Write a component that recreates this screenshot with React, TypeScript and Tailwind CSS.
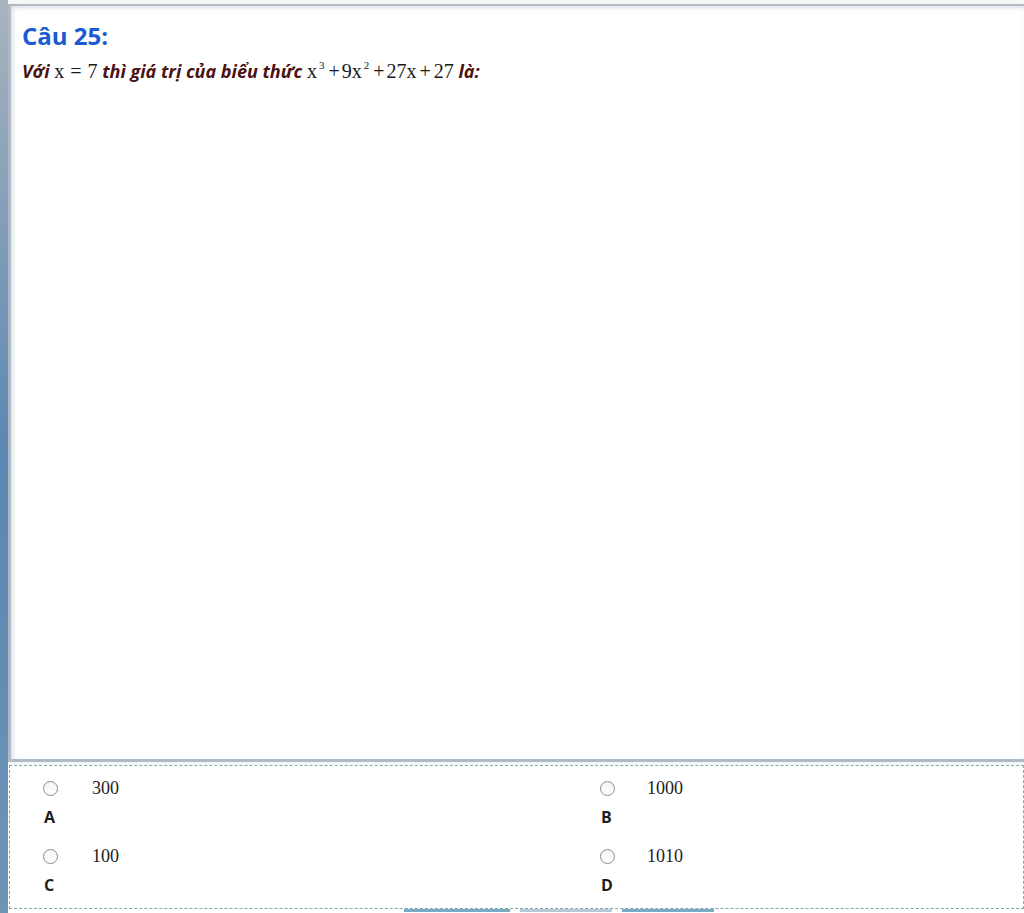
import React from "react";

type Opt = { label: string; value: string };

const rows: Opt[][] = [
  [
    { label: "A", value: "300" },
    { label: "B", value: "1000" },
  ],
  [
    { label: "C", value: "100" },
    { label: "D", value: "1010" },
  ],
];

const serif = { fontFamily: '"Liberation Serif", "Times New Roman", serif' };

function Radio() {
  return (
    <span className="inline-block w-[15px] h-[15px] rounded-full border border-[#8c8c8c] bg-gradient-to-b from-[#f4f4f4] to-white shrink-0" />
  );
}

function Option({ label, value, col }: Opt & { col: number }) {
  return (
    <div className={col === 0 ? "w-[557px] pl-[33px]" : "flex-1 pl-[33px]"}>
      <div className="flex items-center h-[24px]">
        <Radio />
        <span className={`text-[18px] text-[#222] ${col === 0 ? "ml-[34px]" : "ml-[32px]"}`} style={serif}>
          {value}
        </span>
      </div>
      <div className="mt-[6px] pl-[1px] text-[16px] font-bold text-[#1e1e1e] leading-[22px]">{label}</div>
    </div>
  );
}

function Sup({ n }: { n: string }) {
  return <sup className="text-[11px] -top-[9px] ml-[2px] mr-[4px]">{n}</sup>;
}

export default function App() {
  return (
    <div
      className="w-[1024px] h-[913px] bg-white flex overflow-hidden"
      style={{ fontFamily: '"Open Sans", "Noto Sans", sans-serif' }}
    >
      <div className="w-[8px] h-full bg-gradient-to-b from-[#a9b3bd] via-[#5b87b2] to-[#6f93b5]" />
      <div className="flex-1 flex flex-col bg-[#f4f6f8] pt-[4px]">
        <div className="h-[758px] bg-white border-t-[2px] border-l-[3px] border-b-[3px] border-[#aebbc6] shadow-[inset_2px_2px_4px_rgba(150,165,180,0.35)] pl-[11px] pt-[14px]">
          <h1 className="text-[24px] font-bold text-[#1a5bd3] leading-[32px]">Câu 25:</h1>
          <p className="mt-[5px] text-[18px] font-bold italic text-[#4a1212] leading-[28px] whitespace-nowrap">
            Với{" "}
            <span className="not-italic font-normal text-[20px] text-[#1a1a1a]" style={serif}>
              x<span className="mx-[6px]">=</span>7
            </span>{" "}
            thì giá trị của biểu thức{" "}
            <span className="not-italic font-normal text-[20px] text-[#1a1a1a]" style={serif}>
              x<Sup n="3" />+<span className="ml-[2px]">9x</span><Sup n="2" />+<span className="ml-[2px]">27x</span>
              <span className="mx-[3px]">+</span>27
            </span>{" "}
            là:
          </p>
        </div>
        <div className="mt-[3px] bg-white flex-1 flex flex-col">
          <div className="h-[144px] ml-[1px] border border-dashed border-[#7eaab2] pt-[10px] flex flex-col gap-[16px]">
            {rows.map((r, i) => (
              <div key={i} className="flex">
                {r.map((o, j) => (
                  <Option key={o.label} {...o} col={j} />
                ))}
              </div>
            ))}
          </div>
          <div className="flex gap-[10px] pl-[396px]">
            <div className="w-[106px] h-[3px] bg-[#7aaac4]" />
            <div className="w-[92px] h-[3px] bg-[#b7c9d3]" />
            <div className="w-[92px] h-[3px] bg-[#7aaac4]" />
          </div>
        </div>
      </div>
    </div>
  );
}
